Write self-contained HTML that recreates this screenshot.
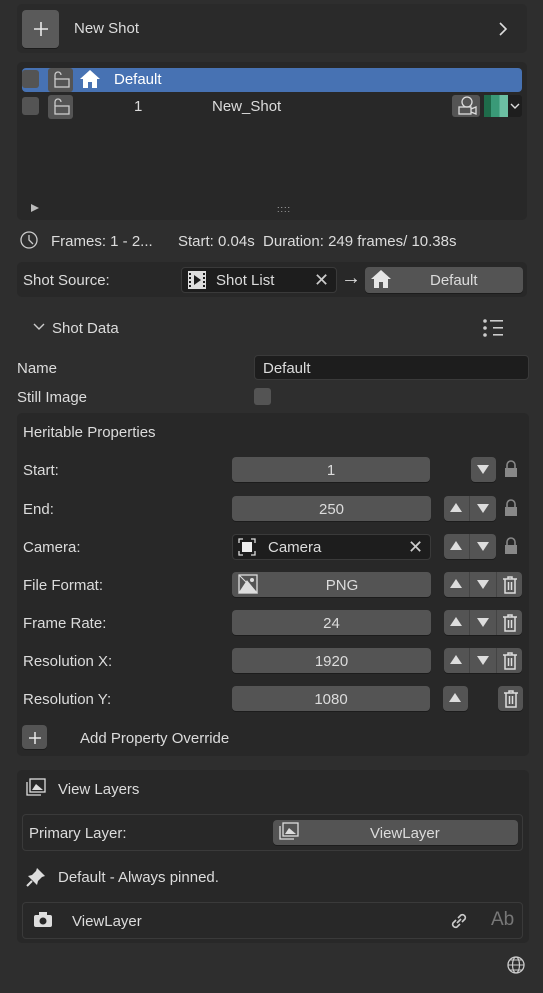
<!DOCTYPE html>
<html><head><style>
body{margin:0;width:543px;height:993px;background:#2e2e2e;font-family:"Liberation Sans",sans-serif;font-size:15px;color:#dcdcdc;position:relative;overflow:hidden}
.a{position:absolute}
.box{position:absolute;background:#282828;border-radius:5px}
.btn{position:absolute;background:#545454;border-radius:4px;box-shadow:0 1px 0 #1c1c1c}
.fld{position:absolute;background:#1d1d1d;border-radius:4px;border:1px solid #3a3a3a;box-sizing:border-box}
.t{position:absolute;white-space:nowrap;line-height:18px;margin-top:1px}
.c{text-align:center}
.tri{position:absolute;width:0;height:0;border-left:6px solid transparent;border-right:6px solid transparent}
</style></head><body>

<div class="box" style="left:17px;top:4px;width:510px;height:49px;background:#2a2a2a"></div>
<div class="btn" style="left:22px;top:10px;width:37px;height:38px;background:#5a5a5a"></div>
<svg class="a" style="left:32px;top:20px" width="18" height="18"><path d="M9 2 V16 M2 9 H16" stroke="#e8e8e8" stroke-width="1.6"/></svg>
<div class="t" style="left:74px;top:19px">New Shot</div>
<svg class="a" style="left:497px;top:21px" width="12" height="16"><path d="M3 2 L9 8 L3 14" stroke="#ddd" stroke-width="1.6" fill="none"/></svg>

<div class="box" style="left:17px;top:62px;width:510px;height:158px"></div>
<div class="a" style="left:22px;top:68px;width:500px;height:24px;background:#4772b3;border-radius:4px"></div>
<div class="a" style="left:22px;top:70px;width:17px;height:18px;background:#545454;border-radius:3px"></div>
<div class="a" style="left:48px;top:68px;width:25px;height:24px;background:#545454;border-radius:3px"></div>
<svg class="a" style="left:50px;top:70px" width="22" height="20"><path d="M5 9 V5 a3 3 0 0 1 6 0" stroke="#ccc" fill="none" stroke-width="1.3"/><rect x="5" y="9" width="14" height="8" stroke="#ccc" fill="none" stroke-width="1.3"/></svg>
<svg class="a" style="left:78px;top:68px" width="24" height="22"><path d="M2 11 L12 2 L22 11 L19 11 L19 20 L14 20 L14 14 L10 14 L10 20 L5 20 L5 11Z" fill="#fff"/></svg>
<div class="t" style="left:114px;top:70px;color:#fff">Default</div>
<div class="a" style="left:22px;top:97px;width:17px;height:18px;background:#545454;border-radius:3px"></div>
<div class="a" style="left:48px;top:95px;width:25px;height:24px;background:#545454;border-radius:3px"></div>
<svg class="a" style="left:50px;top:97px" width="22" height="20"><path d="M5 9 V5 a3 3 0 0 1 6 0" stroke="#ccc" fill="none" stroke-width="1.3"/><rect x="5" y="9" width="14" height="8" stroke="#ccc" fill="none" stroke-width="1.3"/></svg>
<div class="t" style="left:134px;top:97px">1</div>
<div class="t" style="left:212px;top:97px">New_Shot</div>
<div class="a" style="left:452px;top:95px;width:28px;height:22px;background:#545454;border-radius:3px"></div>
<svg class="a" style="left:454px;top:95px" width="24" height="22"><circle cx="13" cy="7" r="5" stroke="#ddd" fill="none" stroke-width="1.3"/><rect x="5" y="12" width="12" height="7" stroke="#ddd" fill="none" stroke-width="1.3"/><path d="M17 14 L22 12 V19 L17 17" stroke="#ddd" fill="none" stroke-width="1.3"/></svg>
<div class="a" style="left:484px;top:95px;width:24px;height:22px;background:linear-gradient(90deg,#1e6b4a 0 30%,#3a9a78 30% 65%,#6cbfa3 65%)"></div>
<div class="a" style="left:508px;top:95px;width:14px;height:22px;background:#1e1e1e;border-radius:0 3px 3px 0"></div>
<svg class="a" style="left:510px;top:102px" width="10" height="8"><path d="M1 2 L5 6 L9 2" stroke="#ddd" fill="none" stroke-width="1.4"/></svg>
<svg class="a" style="left:30px;top:203px" width="10" height="10"><path d="M1 1 L9 5 L1 9Z" fill="#bbb"/></svg>
<div class="t" style="left:277px;top:199px;font-size:9px;color:#bbb;letter-spacing:1px">::::</div>

<svg class="a" style="left:19px;top:230px" width="20" height="20"><circle cx="10" cy="10" r="8" stroke="#ccc" fill="none" stroke-width="1.3"/><path d="M10 5 V10 L14 14" stroke="#ccc" fill="none" stroke-width="1.3"/></svg>
<div class="t" style="left:51px;top:232px">Frames: 1 - 2...</div>
<div class="t" style="left:178px;top:232px">Start: 0.04s&nbsp; Duration: 249 frames/ 10.38s</div>

<div class="box" style="left:17px;top:262px;width:510px;height:35px"></div>
<div class="t" style="left:23px;top:271px">Shot Source:</div>
<div class="fld" style="left:181px;top:267px;width:156px;height:26px"></div>
<svg class="a" style="left:187px;top:270px" width="20" height="20"><rect x="1" y="1" width="18" height="18" fill="#ddd"/><path d="M7 5 L14 10 L7 15Z" fill="#1d1d1d"/><path d="M3 3 v14 M17 3 v14" stroke="#1d1d1d" stroke-width="2" stroke-dasharray="2 2"/></svg>
<div class="t" style="left:216px;top:271px">Shot List</div>
<div class="t" style="left:314px;top:270px;font-size:18px;color:#ccc">✕</div>
<div class="t" style="left:341px;top:268px;font-size:20px">→</div>
<div class="btn" style="left:365px;top:267px;width:158px;height:26px"></div>
<svg class="a" style="left:369px;top:268px" width="24" height="22"><path d="M2 11 L12 2 L22 11 L19 11 L19 20 L14 20 L14 14 L10 14 L10 20 L5 20 L5 11Z" fill="#e6e6e6"/></svg>
<div class="t" style="left:430px;top:271px">Default</div>

<svg class="a" style="left:33px;top:322px" width="12" height="10"><path d="M1 2 L6 7 L11 2" stroke="#ccc" fill="none" stroke-width="1.4"/></svg>
<div class="t" style="left:52px;top:319px">Shot Data</div>
<svg class="a" style="left:482px;top:318px" width="22" height="20"><g fill="#ccc"><circle cx="3" cy="3" r="1.8"/><circle cx="3" cy="10" r="1.8"/><circle cx="3" cy="17" r="1.8"/><rect x="8" y="2" width="13" height="1.6"/><rect x="11" y="9" width="10" height="1.6"/><rect x="11" y="16" width="10" height="1.6"/></g></svg>
<div class="t" style="left:17px;top:359px">Name</div>
<div class="fld" style="left:254px;top:355px;width:275px;height:25px"></div>
<div class="t" style="left:263px;top:359px">Default</div>
<div class="t" style="left:17px;top:388px">Still Image</div>
<div class="a" style="left:254px;top:388px;width:17px;height:17px;background:#545454;border-radius:3px"></div>

<div class="box" style="left:17px;top:413px;width:512px;height:343px"></div>
<div class="t" style="left:23px;top:423px">Heritable Properties</div>

<div class="t" style="left:23px;top:461px">Start:</div>
<div class="btn" style="left:232px;top:457px;width:198px;height:25px"><div class="t c" style="width:100%;top:4px">1</div></div>
<div class="btn" style="left:471px;top:457px;width:25px;height:25px"></div><div class="tri" style="left:477px;top:465px;border-top:9px solid #ddd"></div>

<div class="t" style="left:23px;top:500px">End:</div>
<div class="btn" style="left:232px;top:496px;width:199px;height:25px"><div class="t c" style="width:100%;top:4px">250</div></div>

<div class="t" style="left:23px;top:538px">Camera:</div>
<div class="fld" style="left:232px;top:534px;width:199px;height:26px"></div>
<svg class="a" style="left:238px;top:538px" width="18" height="18"><path d="M1 5 V1 H5 M13 1 H17 V5 M17 13 V17 H13 M5 17 H1 V13" stroke="#ddd" fill="none" stroke-width="1.3"/><rect x="4" y="4" width="10" height="10" fill="#eee"/></svg>
<div class="t" style="left:268px;top:538px">Camera</div>
<div class="t" style="left:408px;top:537px;font-size:18px;color:#ccc">✕</div>

<div class="t" style="left:23px;top:576px">File Format:</div>
<div class="btn" style="left:232px;top:572px;width:199px;height:25px"><div class="t c" style="left:20px;width:180px;top:4px">PNG</div></div>
<svg class="a" style="left:238px;top:574px" width="20" height="20"><rect x="1" y="1" width="18" height="18" stroke="#ddd" fill="none" stroke-width="1.3"/><path d="M1 19 L9 7 L19 19Z M1 1 L19 19" fill="#ddd" stroke="#ddd"/><circle cx="14" cy="6" r="2" fill="#ddd"/></svg>

<div class="t" style="left:23px;top:614px">Frame Rate:</div>
<div class="btn" style="left:232px;top:610px;width:199px;height:25px"><div class="t c" style="width:100%;top:4px">24</div></div>
<div class="t" style="left:23px;top:652px">Resolution X:</div>
<div class="btn" style="left:232px;top:648px;width:199px;height:25px"><div class="t c" style="width:100%;top:4px">1920</div></div>
<div class="t" style="left:23px;top:690px">Resolution Y:</div>
<div class="btn" style="left:232px;top:686px;width:198px;height:25px"><div class="t c" style="width:100%;top:4px">1080</div></div>

<div class="btn" style="left:444px;top:496px;width:52px;height:25px"></div>
<div class="btn" style="left:444px;top:534px;width:52px;height:25px"></div>
<div class="btn" style="left:444px;top:572px;width:78px;height:25px"></div>
<div class="btn" style="left:444px;top:610px;width:78px;height:25px"></div>
<div class="btn" style="left:444px;top:648px;width:78px;height:25px"></div>
<div class="btn" style="left:443px;top:686px;width:25px;height:25px"></div>
<div class="btn" style="left:498px;top:686px;width:25px;height:25px"></div>
<div class="a" style="left:469px;top:496px;width:1px;height:25px;background:#444"></div>
<div class="a" style="left:469px;top:534px;width:1px;height:25px;background:#444"></div>
<div class="a" style="left:469px;top:572px;width:1px;height:25px;background:#444"></div>
<div class="a" style="left:469px;top:610px;width:1px;height:25px;background:#444"></div>
<div class="a" style="left:469px;top:648px;width:1px;height:25px;background:#444"></div>
<div class="a" style="left:496px;top:572px;width:1px;height:25px;background:#444"></div>
<div class="a" style="left:496px;top:610px;width:1px;height:25px;background:#444"></div>
<div class="a" style="left:496px;top:648px;width:1px;height:25px;background:#444"></div>
<div class="tri" style="left:450px;top:503px;border-bottom:9px solid #ddd"></div>
<div class="tri" style="left:450px;top:541px;border-bottom:9px solid #ddd"></div>
<div class="tri" style="left:450px;top:579px;border-bottom:9px solid #ddd"></div>
<div class="tri" style="left:450px;top:617px;border-bottom:9px solid #ddd"></div>
<div class="tri" style="left:450px;top:655px;border-bottom:9px solid #ddd"></div>
<div class="tri" style="left:449px;top:693px;border-bottom:9px solid #ddd"></div>
<div class="tri" style="left:477px;top:504px;border-top:9px solid #ddd"></div>
<div class="tri" style="left:477px;top:542px;border-top:9px solid #ddd"></div>
<div class="tri" style="left:477px;top:580px;border-top:9px solid #ddd"></div>
<div class="tri" style="left:477px;top:618px;border-top:9px solid #ddd"></div>
<div class="tri" style="left:477px;top:656px;border-top:9px solid #ddd"></div>
<svg class="a" style="left:503px;top:460px" width="16" height="18"><path d="M4 8 V5 a4 4 0 0 1 8 0 V8" stroke="#888" fill="none" stroke-width="1.6"/><rect x="2" y="8" width="12" height="9" fill="#888"/></svg>
<svg class="a" style="left:503px;top:499px" width="16" height="18"><path d="M4 8 V5 a4 4 0 0 1 8 0 V8" stroke="#888" fill="none" stroke-width="1.6"/><rect x="2" y="8" width="12" height="9" fill="#888"/></svg>
<svg class="a" style="left:503px;top:537px" width="16" height="18"><path d="M4 8 V5 a4 4 0 0 1 8 0 V8" stroke="#888" fill="none" stroke-width="1.6"/><rect x="2" y="8" width="12" height="9" fill="#888"/></svg>
<svg class="a" style="left:501px;top:575px" width="18" height="20"><path d="M2 4 H16 M7 4 V2 H11 V4 M4 4 V18 H14 V4 M7.5 7 V15 M10.5 7 V15" stroke="#ddd" fill="none" stroke-width="1.5"/></svg>
<svg class="a" style="left:501px;top:613px" width="18" height="20"><path d="M2 4 H16 M7 4 V2 H11 V4 M4 4 V18 H14 V4 M7.5 7 V15 M10.5 7 V15" stroke="#ddd" fill="none" stroke-width="1.5"/></svg>
<svg class="a" style="left:501px;top:651px" width="18" height="20"><path d="M2 4 H16 M7 4 V2 H11 V4 M4 4 V18 H14 V4 M7.5 7 V15 M10.5 7 V15" stroke="#ddd" fill="none" stroke-width="1.5"/></svg>
<svg class="a" style="left:502px;top:689px" width="18" height="20"><path d="M2 4 H16 M7 4 V2 H11 V4 M4 4 V18 H14 V4 M7.5 7 V15 M10.5 7 V15" stroke="#ddd" fill="none" stroke-width="1.5"/></svg>

<div class="btn" style="left:22px;top:725px;width:25px;height:24px"></div>
<svg class="a" style="left:28px;top:731px" width="14" height="14"><path d="M7 1 V13 M1 7 H13" stroke="#e8e8e8" stroke-width="1.5"/></svg>
<div class="t" style="left:80px;top:729px">Add Property Override</div>

<div class="box" style="left:17px;top:770px;width:512px;height:173px"></div>
<svg class="a" style="left:25px;top:778px" width="22" height="20"><rect x="5" y="1" width="15" height="13" stroke="#ddd" fill="none" stroke-width="1.3"/><path d="M2 4 V17 H16" stroke="#ddd" fill="none" stroke-width="1.3"/><path d="M7 12 L11 6 L18 12Z" fill="#ddd"/></svg>
<div class="t" style="left:58px;top:780px">View Layers</div>
<div class="a" style="left:22px;top:814px;width:501px;height:37px;border:1px solid #3a3a3a;border-radius:4px;box-sizing:border-box"></div>
<div class="t" style="left:29px;top:824px">Primary Layer:</div>
<div class="btn" style="left:273px;top:820px;width:245px;height:25px"></div>
<svg class="a" style="left:278px;top:822px" width="22" height="20"><rect x="5" y="1" width="15" height="13" stroke="#ddd" fill="none" stroke-width="1.3"/><path d="M2 4 V17 H16" stroke="#ddd" fill="none" stroke-width="1.3"/><path d="M7 12 L11 6 L18 12Z" fill="#ddd"/></svg>
<div class="t" style="left:370px;top:824px">ViewLayer</div>
<svg class="a" style="left:25px;top:866px" width="22" height="22"><path d="M12 2 L20 10 L17 11 L13 15 L12 19 L3 10 L7 9 L11 5Z" fill="#ddd"/><path d="M7 15 L2 20" stroke="#ddd" stroke-width="2"/></svg>
<div class="t" style="left:58px;top:868px">Default - Always pinned.</div>
<div class="a" style="left:22px;top:902px;width:501px;height:37px;border:1px solid #3a3a3a;border-radius:4px;box-sizing:border-box"></div>
<svg class="a" style="left:33px;top:911px" width="20" height="18"><rect x="1" y="4" width="18" height="12" rx="2" fill="#ddd"/><rect x="6" y="1" width="8" height="4" fill="#ddd"/><circle cx="10" cy="10" r="3.5" fill="#282828"/></svg>
<div class="t" style="left:72px;top:912px">ViewLayer</div>
<svg class="a" style="left:448px;top:910px" width="22" height="22"><path d="M9 13 L13 9 M8 10 L5 13 a3 3 0 0 0 4 4 L12 14 M10 8 L13 5 a3 3 0 0 1 4 4 L14 12" stroke="#ccc" fill="none" stroke-width="1.6"/></svg>
<div class="t" style="left:491px;top:910px;font-size:19px;color:#777">Ab</div>

<svg class="a" style="left:506px;top:955px" width="22" height="22"><circle cx="10" cy="10" r="8" stroke="#ccc" fill="none" stroke-width="1.3"/><ellipse cx="10" cy="10" rx="3.5" ry="8" stroke="#ccc" fill="none" stroke-width="1.2"/><path d="M2 10 H18 M4 5 H16 M4 15 H16" stroke="#ccc" stroke-width="1.1"/></svg>
</body></html>
